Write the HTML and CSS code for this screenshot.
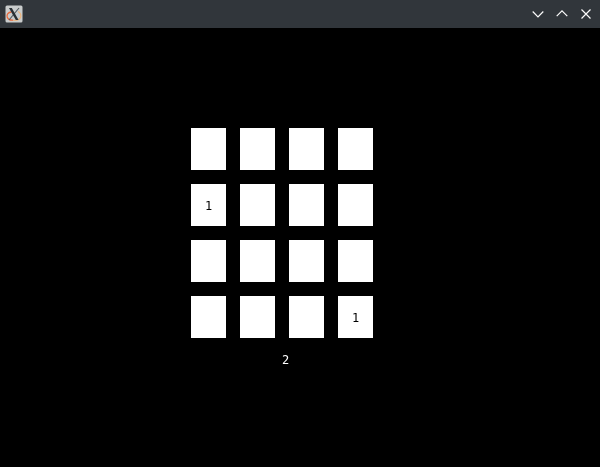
FILE: index.html
```html
<!DOCTYPE html>
<html lang="en">
<head>
<meta charset="utf-8">
<title>Grid</title>
<link rel="stylesheet" href="styles.css">
</head>
<body>
<header class="titlebar">
  <svg class="app-icon" width="18" height="18" viewBox="0 0 18 18">
    <rect x="0.5" y="0.5" width="17" height="17" rx="1.5" fill="#c9cccc"/>
    <path d="M6.5 7C3 7.2 1.6 9.5 2.2 12C3 14.5 5.5 15.3 8 15.2" fill="none" stroke="#e8693c" stroke-width="1.3"/>
    <path d="M8 15.2C12 15.6 15.5 14.5 15.8 11.5C16 9.5 15 7.5 13 6.5" fill="none" stroke="#f0b478" stroke-width="1.1"/>
    <path d="M14 3L4 15" stroke="#50575a" stroke-width="1.1"/>
    <path d="M4 3H6.8L13.6 15H10.8Z" fill="#293034"/>
  </svg>
  <div class="controls">
    <svg width="12" height="12" viewBox="0 0 12 12"><path d="M0.7 3.5L6 8.8L11.3 3.5"/></svg>
    <svg width="12" height="12" viewBox="0 0 12 12"><path d="M0.7 8.2L6 2.9L11.3 8.2"/></svg>
    <svg width="12" height="12" viewBox="0 0 12 12"><path d="M1.5 1.5L10.5 10.5M10.5 1.5L1.5 10.5"/></svg>
  </div>
</header>
<main class="game">
  <div class="board">
    <div class="tile"></div><div class="tile"></div><div class="tile"></div><div class="tile"></div>
    <div class="tile">1</div><div class="tile"></div><div class="tile"></div><div class="tile"></div>
    <div class="tile"></div><div class="tile"></div><div class="tile"></div><div class="tile"></div>
    <div class="tile"></div><div class="tile"></div><div class="tile"></div><div class="tile">1</div>
  </div>
  <div class="moves">2</div>
</main>
</body>
</html>
```
FILE: styles.css
```css
body {
  margin: 0;
  height: 467px;
  overflow: hidden;
  background: #000;
  font: 12px/14px "DejaVu Sans Mono", monospace;
}
.titlebar {
  display: flex;
  justify-content: space-between;
  align-items: center;
  box-sizing: border-box;
  height: 28px;
  padding: 0 8px 0 5px;
  background: #31363b;
}
.app-icon {
  display: block;
}
.controls {
  display: flex;
  gap: 12px;
}
.controls svg {
  display: block;
  fill: none;
  stroke: #fcfcfc;
  stroke-width: 1.2;
}
.game {
  padding: 100px 0 0 191px;
  will-change: opacity;
}
.board {
  display: grid;
  grid-template-columns: repeat(4, 35px);
  grid-auto-rows: 42px;
  gap: 14px;
}
.tile {
  box-sizing: border-box;
  padding: 15px 0 0 14px;
  background: #fff;
  color: #000;
}
.moves {
  margin: 15px 0 0 91px;
  color: #fff;
}
```
